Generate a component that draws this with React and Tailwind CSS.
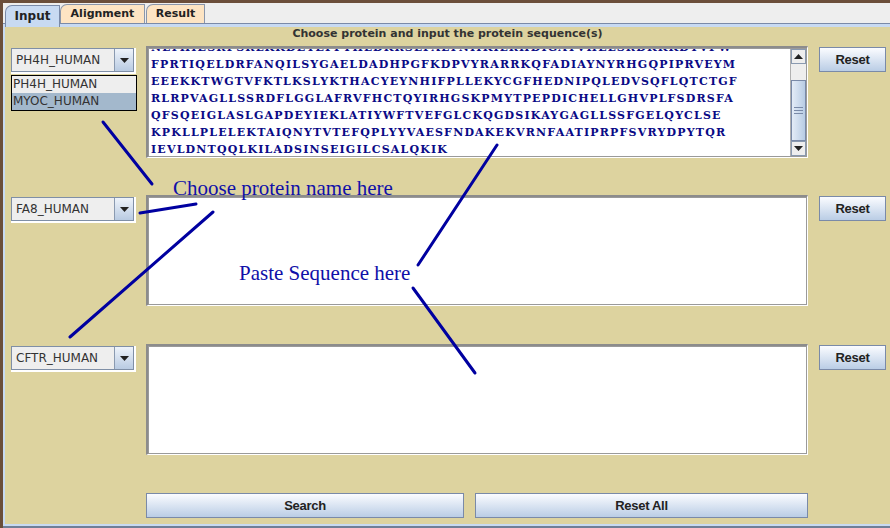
import React from 'react';

const seqLines = [
  'NLTHIESRPSRLKKDEYEFFTHLDKRSLPALTNIIKILRHDIGATVHELSRDKKKDTVPW',
  'FPRTIQELDRFANQILSYGAELDADHPGFKDPVYRARRKQFADIAYNYRHGQPIPRVEYM',
  'EEEKKTWGTVFKTLKSLYKTHACYEYNHIFPLLEKYCGFHEDNIPQLEDVSQFLQTCTGF',
  'RLRPVAGLLSSRDFLGGLAFRVFHCTQYIRHGSKPMYTPEPDICHELLGHVPLFSDRSFA',
  'QFSQEIGLASLGAPDEYIEKLATIYWFTVEFGLCKQGDSIKAYGAGLLSSFGELQYCLSE',
  'KPKLLPLELEKTAIQNYTVTEFQPLYYVAESFNDAKEKVRNFAATIPRPFSVRYDPYTQR',
  'IEVLDNTQQLKILADSINSEIGILCSALQKIK',
];

function Triangle({ up }) {
  return (
    <svg width="9" height="5" viewBox="0 0 9 5">
      <path d={up ? 'M0 5 L4.5 0 L9 5 Z' : 'M0 0 L9 0 L4.5 5 Z'} fill="#222" />
    </svg>
  );
}

function Combo({ value, children }) {
  return (
    <div className="relative w-[125px] border-r-2 border-b-2 border-white">
      <div className="flex h-[24px] border border-[#7f8fa6] bg-[#eeeeee]">
        <div className="flex flex-1 items-center pl-[4px] text-[12px] text-[#333]">{value}</div>
        <div className="flex w-[19px] items-center justify-center border-l border-[#8a9ab0] bg-linear-to-b from-[#eef3fa] to-[#b9cbe2]">
          <Triangle />
        </div>
      </div>
      {children}
    </div>
  );
}

function Button({ children, className }) {
  return (
    <button
      className={`h-[25px] border border-[#7a8aa8] bg-linear-to-b from-[#fbfcff] to-[#bacde5] font-['Liberation_Sans',sans-serif] text-[13px] font-bold tracking-[-0.3px] text-[#222] ${className}`}
    >
      {children}
    </button>
  );
}

function TextBox({ height, children }) {
  return (
    <div className={`w-[662px] ${height} border-t-2 border-l-2 border-r border-b border-t-[#8c8c8c] border-l-[#8c8c8c] border-r-white border-b-white`}>
      <div className="relative flex h-full border border-[#9a9a9a] bg-white">{children}</div>
    </div>
  );
}

function Row({ combo, height, children, className }) {
  return (
    <div className={`flex items-start ${className}`}>
      <div className="mt-[2px] ml-[6px] w-[125px]">{combo}</div>
      <div className="ml-[10px]">
        <TextBox height={height}>{children}</TextBox>
      </div>
      <Button className="mt-[1px] ml-[11px] w-[67px]">Reset</Button>
    </div>
  );
}

export default function App() {
  return (
    <div className="relative flex h-[528px] w-[890px] flex-col overflow-hidden bg-[#6b4e3a] pt-[3px] pl-[3px] font-['DejaVu_Sans',sans-serif]">
      {/* tab strip */}
      <div className="flex h-[20px] items-end bg-[#eeeeee] pl-[2px]">
        <div className="relative z-10 -mb-[4px] flex h-[22px] w-[55px] items-start justify-center rounded-tl-[7px] border-t border-l border-r border-[#7a8aa8] bg-[#c8daf2] pt-[1px] text-[12px] font-bold text-[#222]">
          Input
        </div>
        <div className="flex h-[19px] w-[85px] items-center justify-center rounded-tl-[7px] border-t border-l border-r border-[#8a96aa] bg-[#fde4c3] text-[11px] font-bold text-[#222]">
          Alignment
        </div>
        <div className="ml-[1px] flex h-[19px] w-[59px] items-center justify-center rounded-tl-[7px] border-t border-l border-r border-[#8a96aa] bg-[#fde4c3] text-[11px] font-bold text-[#222]">
          Result
        </div>
      </div>
      <div className="h-[1px] bg-[#7a8aa8]" />
      <div className="h-[3px] bg-[#c8daf2]" />

      {/* content panel */}
      <div className="flex flex-1 flex-col border-l-2 border-b-2 border-[#c8daf2] bg-[#ddd39f]">
        <div className="-mt-[1px] h-[16px] text-center text-[11px] leading-[16px] font-bold text-[#333]">
          Choose protein and input the protein sequence(s)
        </div>

        <Row
          className="mt-[4px]"
          height="h-[112px]"
          combo={
            <Combo value="PH4H_HUMAN">
              <div className="absolute top-[27px] left-0 z-10 w-[126px] border border-black text-[12px] text-[#333]">
                <div className="h-[17px] bg-[#eeeeee] pl-[1px] leading-[17px]">PH4H_HUMAN</div>
                <div className="h-[17px] bg-[#a3b8cc] pl-[1px] leading-[17px]">MYOC_HUMAN</div>
              </div>
            </Combo>
          }
        >
          <div className="flex-1 overflow-hidden pl-[2px]">
            <div className="-mt-[10px] font-['DejaVu_Serif',serif] text-[11px] leading-[17px] font-bold tracking-[1.2px] whitespace-nowrap text-[#0a0a86]">
              {seqLines.map((l) => (
                <div key={l}>{l}</div>
              ))}
            </div>
          </div>
          {/* scrollbar */}
          <div className="flex w-[16px] flex-col border-l border-[#b0b0b0] bg-[#eeeeee]">
            <div className="flex h-[15px] items-center justify-center border border-[#8a9ab0] bg-[#eeeeee]">
              <Triangle up />
            </div>
            <div className="h-[16px]" />
            <div className="flex h-[61px] flex-col items-center justify-center gap-[2px] border border-[#7a8aa8] bg-linear-to-r from-[#e4ecf7] to-[#b8cce4]">
              <div className="h-[1px] w-[9px] bg-[#7a8aa8]" />
              <div className="h-[1px] w-[9px] bg-[#7a8aa8]" />
              <div className="h-[1px] w-[9px] bg-[#7a8aa8]" />
            </div>
            <div className="flex-1" />
            <div className="flex h-[15px] items-center justify-center border border-[#8a9ab0] bg-[#eeeeee]">
              <Triangle />
            </div>
          </div>
        </Row>

        <Row className="mt-[37px]" height="h-[111px]" combo={<Combo value="FA8_HUMAN" />} />
        <Row className="mt-[38px]" height="h-[111px]" combo={<Combo value="CFTR_HUMAN" />} />

        <div className="mt-[38px] ml-[141px] flex gap-[11px]">
          <Button className="w-[318px]">Search</Button>
          <Button className="w-[333px]">Reset All</Button>
        </div>
      </div>
      <div className="h-[2px] bg-[#6f7f96]" />

      {/* hand-drawn annotations */}
      <svg className="pointer-events-none absolute inset-0 z-20" width="890" height="528" viewBox="0 0 890 528">
        <g stroke="#0000a0" strokeWidth="3" strokeLinecap="round">
          <line x1="103" y1="122" x2="152" y2="184" />
          <line x1="140" y1="213" x2="196" y2="204" />
          <line x1="213" y1="212" x2="70" y2="337" />
          <line x1="497" y1="145" x2="418" y2="265" />
          <line x1="413" y1="288" x2="475" y2="373" />
        </g>
      </svg>
      <div className="pointer-events-none absolute top-[176px] left-[173px] z-20 font-['Liberation_Serif',serif] text-[21px] leading-[24px] text-[#1010a8]">
        Choose protein name here
      </div>
      <div className="pointer-events-none absolute top-[261px] left-[239px] z-20 font-['Liberation_Serif',serif] text-[21px] leading-[24px] text-[#1010a8]">
        Paste Sequence here
      </div>
    </div>
  );
}
